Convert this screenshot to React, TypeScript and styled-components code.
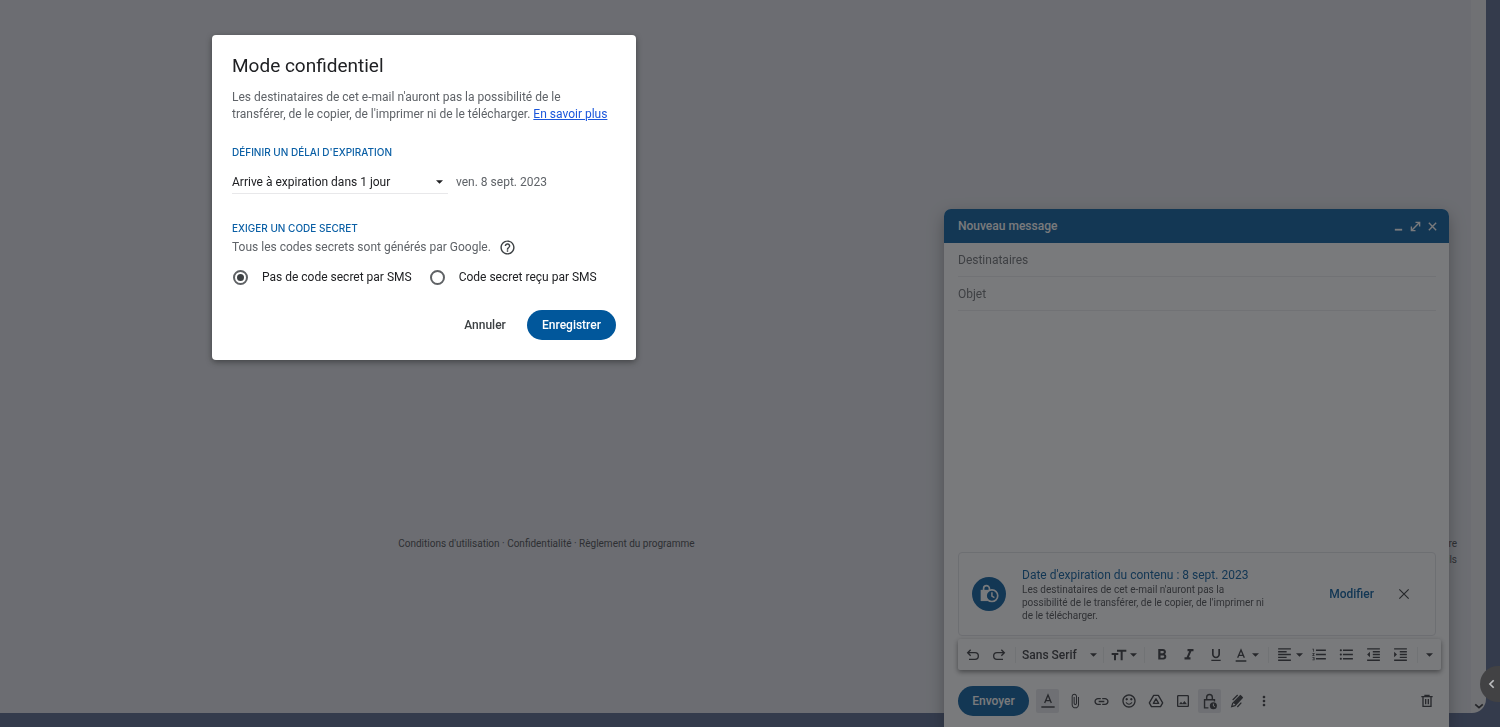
import React from "react";
import styled, { createGlobalStyle } from "styled-components";
import {
  MdAttachFile,
  MdFormatAlignLeft,
  MdFormatBold,
  MdFormatIndentDecrease,
  MdFormatIndentIncrease,
  MdFormatItalic,
  MdFormatListBulleted,
  MdFormatListNumbered,
  MdFormatUnderlined,
  MdHelpOutline,
  MdLink,
  MdMoreVert,
  MdOutlineImage,
  MdSentimentSatisfiedAlt,
} from "react-icons/md";

const theme = "#01579b";

const GlobalStyle = createGlobalStyle`
  * { box-sizing: border-box; }
  body { margin: 0; background: #536288; }
  body, button, input, select, textarea { font-family: Roboto, "Liberation Sans", sans-serif; }
  h1, h2, p { margin: 0; }
  button { border: 0; padding: 0; background: none; color: inherit; }
`;

/* ---------- page behind ---------- */

const Page = styled.div`
  display: flex;
  min-height: 100vh;
  padding: 0 14px 14px 0;
`;

const Main = styled.main`
  flex: 1;
  display: flex;
  align-items: flex-end;
  padding: 0 14px 145px 0;
  background: #dedfe5;
`;

const ScrollStrip = styled.div`
  display: flex;
  flex: none;
  align-items: flex-end;
  justify-content: center;
  width: 15px;
  padding-bottom: 2px;
  background: #e8e8ea;
  border-radius: 0 0 14px 0;
  color: #2b2c30;
`;

const Footer = styled.footer`
  display: flex;
  flex: 1;
  font-size: 10px;
  line-height: 16px;
  color: #444549;
`;

const Legal = styled.p`
  flex: 3;
  text-align: center;
`;

const Activity = styled.div`
  flex: 1;
  text-align: right;
`;

const PlainLink = styled.a`
  color: inherit;
  text-decoration: none;
`;

/* ---------- compose window ---------- */

const Compose = styled.section`
  position: fixed;
  right: 51px;
  bottom: 0;
  display: flex;
  flex-direction: column;
  width: 505px;
  height: 518px;
  background: #fff;
  border-radius: 7px 7px 0 0;
  box-shadow: 0 6px 16px rgba(0, 0, 0, 0.35);
`;

const ComposeHeader = styled.header`
  display: flex;
  align-items: center;
  justify-content: space-between;
  height: 34px;
  padding: 0 11px 0 14px;
  border-radius: 7px 7px 0 0;
  background: ${theme};
  color: #fff;
`;

const ComposeTitle = styled.h2`
  font-size: 12px;
  font-weight: 500;
`;

const WindowButtons = styled.div`
  display: flex;
  gap: 5px;
`;

const WindowButton = styled.button`
  display: flex;
  align-items: center;
  justify-content: center;
  width: 12px;
  height: 16px;
`;

const Field = styled.input`
  height: 34px;
  margin: 0 13px 0 14px;
  padding: 0;
  border: 0;
  border-bottom: 1px solid #ececee;
  background: none;
  font-size: 12px;
  outline: 0;
  &::placeholder {
    color: #6c6e72;
    opacity: 1;
  }
`;

const Body = styled.textarea`
  flex: 1;
  margin: 0 13px 0 14px;
  padding: 8px 0;
  border: 0;
  background: none;
  resize: none;
  outline: 0;
`;

const ExpiryCard = styled.div`
  display: flex;
  align-items: center;
  height: 84px;
  margin: 0 13px 3px 14px;
  padding: 0 24px 0 13px;
  border: 1px solid #e2e3e6;
  border-radius: 4px;
`;

const ExpiryBadge = styled.div`
  display: flex;
  align-items: center;
  justify-content: center;
  width: 34px;
  height: 34px;
  border-radius: 50%;
  background: ${theme};
  color: #fff;
`;

const ExpiryText = styled.div`
  width: 247px;
  margin-left: 16px;
  font-size: 10px;
  line-height: 13px;
  color: #4a4b4f;
`;

const ExpiryTitle = styled.h2`
  font-size: 12px;
  font-weight: 400;
  line-height: 16px;
  color: ${theme};
`;

const ExpiryEdit = styled.button`
  margin-left: auto;
  font-size: 12px;
  font-weight: 500;
  color: ${theme};
`;

const ExpiryClose = styled.button`
  display: flex;
  margin-left: 23px;
  color: #2f3033;
`;

const FormatBar = styled.div`
  display: flex;
  align-items: center;
  height: 31px;
  margin: 0 8px 0 14px;
  padding-left: 2px;
  border-radius: 2px;
  box-shadow: 0 2px 5px rgba(0, 0, 0, 0.5);
  color: #333438;
`;

const Tool = styled.button<{ $width?: number }>`
  display: flex;
  align-items: center;
  justify-content: center;
  width: ${(p) => p.$width ?? 27}px;
  height: 24px;
`;

const MenuTool = styled(Tool)`
  justify-content: flex-start;
  gap: 3px;
  padding-left: 4px;
`;

const Rule = styled.span`
  width: 1px;
  height: 16px;
  margin: 0 3px;
  background: #eceded;
`;

const FontPicker = styled.label`
  position: relative;
  display: flex;
  align-items: center;
  width: 75px;
  margin: 0 3px;
`;

const FontSelect = styled.select`
  width: 100%;
  padding: 0;
  border: 0;
  background: none;
  appearance: none;
  font-size: 12px;
  font-weight: 500;
  color: inherit;
`;

const CaretSlot = styled.span`
  position: absolute;
  right: 0;
  display: flex;
  pointer-events: none;
`;

const ActionBar = styled.div`
  display: flex;
  align-items: center;
  gap: 4px;
  height: 30px;
  margin: 16px 11px 11px 14px;
  color: #333438;
`;

const Send = styled.button`
  width: 71px;
  height: 30px;
  margin-right: 3px;
  border-radius: 15px;
  background: ${theme};
  color: #fff;
  font-size: 12px;
  font-weight: 500;
`;

const Action = styled.button<{ $active?: boolean; $last?: boolean }>`
  display: flex;
  align-items: center;
  justify-content: center;
  width: 23px;
  height: 24px;
  margin-left: ${(p) => (p.$last ? "auto" : "0")};
  border-radius: 2px;
  background: ${(p) => (p.$active ? "#e6e7ea" : "none")};
`;

/* ---------- dialog ---------- */

const Scrim = styled.div`
  position: fixed;
  inset: 0;
  padding: 35px 212px;
  background: rgba(32, 33, 36, 0.6);
`;

const Dialog = styled.div`
  width: 424px;
  padding: 19px 20px 20px;
  border-radius: 4px;
  background: #fff;
  box-shadow: 0 2px 6px rgba(0, 0, 0, 0.4);
  font-size: 12px;
  color: #202124;
`;

const DialogTitle = styled.h1`
  font-size: 19px;
  font-weight: 400;
  line-height: 24px;
`;

const Muted = styled.p`
  line-height: 17px;
  color: #5f6368;
`;

const Intro = styled(Muted)`
  margin-top: 11px;
`;

const LearnMore = styled.a`
  color: #1a56db;
`;

const SectionTitle = styled.h2<{ $gap: number }>`
  margin-top: ${(p) => p.$gap}px;
  font-family: Inter, Roboto, sans-serif;
  font-size: 10px;
  font-weight: 500;
  line-height: 14px;
  text-transform: uppercase;
  color: #0a5fa5;
`;

const ExpiryRow = styled.div`
  display: flex;
  align-items: center;
  gap: 8px;
  margin-top: 11px;
`;

const Picker = styled.label`
  position: relative;
  display: flex;
  align-items: center;
  width: 216px;
`;

const PickerSelect = styled.select`
  width: 100%;
  height: 24px;
  padding: 0;
  border: 0;
  border-bottom: 1px solid #e8e8ea;
  background: none;
  appearance: none;
  font-size: 12px;
  color: #202124;
`;

const PickerCaret = styled(CaretSlot)`
  right: 5px;
`;

const HelpRow = styled.div`
  display: flex;
  align-items: center;
  gap: 8px;
  height: 16px;
  margin-top: 4px;
`;

const HelpButton = styled.button`
  display: flex;
  color: #3c4043;
`;

const Radios = styled.div`
  display: flex;
  gap: 17px;
  margin-top: 14px;
`;

const RadioLabel = styled.label`
  display: flex;
  align-items: center;
  gap: 14px;
  height: 16px;
`;

const Radio = styled.input`
  display: grid;
  place-items: center;
  width: 15px;
  height: 15px;
  margin: 0 0 0 1px;
  border: 2px solid #5f6265;
  border-radius: 50%;
  appearance: none;
  &:checked::before {
    content: "";
    width: 7px;
    height: 7px;
    border-radius: 50%;
    background: #3c4043;
  }
`;

const Buttons = styled.div`
  display: flex;
  justify-content: flex-end;
  gap: 8px;
  margin-top: 25px;
`;

const DialogButton = styled.button<{ $primary?: boolean }>`
  min-width: ${(p) => (p.$primary ? 89 : 68)}px;
  height: 30px;
  border-radius: 15px;
  background: ${(p) => (p.$primary ? theme : "none")};
  color: ${(p) => (p.$primary ? "#fff" : "#3c4043")};
  font-size: 12px;
  font-weight: 500;
`;

const SidePanelTab = styled.button`
  position: fixed;
  right: 0;
  bottom: 25px;
  display: flex;
  align-items: center;
  width: 20px;
  height: 36px;
  padding-left: 7px;
  border-radius: 18px 0 0 18px;
  background: #424244;
  color: #bcbdbf;
`;

/* ---------- drawings ---------- */

type StrokeProps = { d: string; size?: number; width?: number };
const Stroke = ({ d, size = 16, width = 2 }: StrokeProps) => (
  <svg width={size} height={size} viewBox="0 0 24 24" fill="none" stroke="currentColor" strokeWidth={width} aria-hidden>
    <path d={d} />
  </svg>
);

const Caret = () => (
  <svg width="7" height="4" viewBox="0 0 8 4" fill="currentColor" aria-hidden>
    <path d="M0 0h8L4 4z" />
  </svg>
);

const TextSizeIcon = () => (
  <svg width="16" height="16" viewBox="0 0 24 24" fill="currentColor" aria-hidden>
    <path d="M9 4v3h5.500v13h3V7H23V4zM1 12h3.500v8h3v-8H11V9H1z" />
  </svg>
);

const DriveIcon = () => (
  <svg width="16" height="16" viewBox="0 0 24 24" fill="none" stroke="currentColor" strokeWidth="2" strokeLinejoin="round" aria-hidden>
    <path d="M8.500 3.500h7L22 14.800 18.800 20.500H5.200L2 14.800z" />
    <path d="M12 8.700l4 6.800H8z" />
  </svg>
);

const LockClockIcon = () => (
  <svg width="17" height="17" viewBox="0 0 24 24" fill="none" stroke="currentColor" strokeWidth="2" aria-hidden>
    <path d="M10.500 21H5V9.500h14V12M8 9.500V6a4 4 0 0 1 8 0v3.500" />
    <circle cx="17.500" cy="18" r="5" fill="currentColor" stroke="none" />
    <path d="M17.500 15v3.300l2.200 1.300" stroke="#fff" strokeWidth="1.300" />
  </svg>
);

const BadgeIcon = () => (
  <svg width="20" height="20" viewBox="0 0 24 24" fill="none" aria-hidden>
    <path d="M5.500 8V5.500a3.500 3.500 0 0 1 7 0V8" stroke="currentColor" strokeWidth="2" />
    <path d="M2 7h14v13.500H2z" fill="currentColor" />
    <circle cx="15.500" cy="14" r="7" fill={theme} stroke="currentColor" strokeWidth="2" />
    <path d="M15.500 10v4.500l3 1.800" stroke="currentColor" strokeWidth="1.800" />
  </svg>
);

const PenIcon = () => (
  <svg width="16" height="16" viewBox="0 0 24 24" fill="none" stroke="currentColor" strokeWidth="1.800" aria-hidden>
    <path d="M4 20.500l1.500-5L17 4l3 3L9 19z" />
    <path d="M8 15L18 5l1.500 1.500L10 16.500z" fill="currentColor" />
    <path d="M5.500 10.500L13 3M12.500 21l6-6.500" />
  </svg>
);

const TrashIcon = () => (
  <Stroke d="M6 6v14h12V6M3.500 5.500h17M9 5V3.500h6V5M10 9v8M14 9v8" />
);

const CLOSE = "M4 4l16 16M20 4L4 20";

export default function App() {
  return (
    <>
      <GlobalStyle />
      <Page>
        <Main>
          <Footer>
            <Legal>
              <PlainLink href="#terms">Conditions d'utilisation</PlainLink> ·{" "}
              <PlainLink href="#privacy">Confidentialité</PlainLink> ·{" "}
              <PlainLink href="#program">Règlement du programme</PlainLink>
            </Legal>
            <Activity>
              <div>heure</div>
              <PlainLink href="#details">Détails</PlainLink>
            </Activity>
          </Footer>
        </Main>
        <ScrollStrip>
          <Stroke d="M3 8l9 8 9-8" size={10} width={4} />
        </ScrollStrip>
      </Page>

      <Compose aria-label="Nouveau message">
        <ComposeHeader>
          <ComposeTitle>Nouveau message</ComposeTitle>
          <WindowButtons>
            <WindowButton aria-label="Réduire">
              <Stroke d="M4 19h16" size={11} width={4} />
            </WindowButton>
            <WindowButton aria-label="Plein écran">
              <Stroke d="M12 3h9v9M12 21H3v-9M20 4L4 20" size={11} width={3} />
            </WindowButton>
            <WindowButton aria-label="Fermer">
              <Stroke d={CLOSE} size={11} width={3} />
            </WindowButton>
          </WindowButtons>
        </ComposeHeader>
        <Field aria-label="Destinataires" placeholder="Destinataires" />
        <Field aria-label="Objet" placeholder="Objet" />
        <Body aria-label="Corps du message" />
        <ExpiryCard>
          <ExpiryBadge>
            <BadgeIcon />
          </ExpiryBadge>
          <ExpiryText>
            <ExpiryTitle>Date d'expiration du contenu : 8 sept. 2023</ExpiryTitle>
            <p>
              Les destinataires de cet e-mail n'auront pas la possibilité de le transférer, de le
              copier, de l'imprimer ni de le télécharger.
            </p>
          </ExpiryText>
          <ExpiryEdit>Modifier</ExpiryEdit>
          <ExpiryClose aria-label="Supprimer">
            <Stroke d={CLOSE} size={14} width={2} />
          </ExpiryClose>
        </ExpiryCard>
        <FormatBar role="toolbar">
          <Tool $width={26} aria-label="Annuler la saisie">
            <Stroke d="M8.500 4L4 8.500 8.500 13M4 8.500h11a5 5 0 0 1 0 10H6" />
          </Tool>
          <Tool $width={26} aria-label="Rétablir">
            <Stroke d="M15.500 4L20 8.500 15.500 13M20 8.500H9a5 5 0 0 0 0 10h9" />
          </Tool>
          <Rule />
          <FontPicker>
            <FontSelect aria-label="Police">
              <option>Sans Serif</option>
            </FontSelect>
            <CaretSlot>
              <Caret />
            </CaretSlot>
          </FontPicker>
          <Rule />
          <MenuTool $width={34} aria-label="Taille">
            <TextSizeIcon />
            <Caret />
          </MenuTool>
          <Rule />
          <Tool aria-label="Gras"><MdFormatBold size={18} /></Tool>
          <Tool aria-label="Italique"><MdFormatItalic size={18} /></Tool>
          <Tool aria-label="Souligné"><MdFormatUnderlined size={16} /></Tool>
          <MenuTool $width={36} aria-label="Couleur du texte">
            <Stroke d="M7 16L12 4.500 17 16M8.500 12.500h7M4 21h16" />
            <Caret />
          </MenuTool>
          <Rule />
          <MenuTool $width={34} aria-label="Aligner">
            <MdFormatAlignLeft size={17} />
            <Caret />
          </MenuTool>
          <Tool aria-label="Liste numérotée"><MdFormatListNumbered size={17} /></Tool>
          <Tool aria-label="Liste à puces"><MdFormatListBulleted size={17} /></Tool>
          <Tool aria-label="Retrait négatif"><MdFormatIndentDecrease size={17} /></Tool>
          <Tool aria-label="Retrait positif"><MdFormatIndentIncrease size={17} /></Tool>
          <Rule />
          <Tool $width={16} aria-label="Plus d'options de mise en forme"><Caret /></Tool>
        </FormatBar>
        <ActionBar>
          <Send>Envoyer</Send>
          <Action $active aria-label="Options de mise en forme">
            <Stroke d="M7 15L12 3l5 12M8.500 11.500h7M2 21h20" />
          </Action>
          <Action aria-label="Joindre des fichiers"><MdAttachFile size={16} /></Action>
          <Action aria-label="Insérer un lien"><MdLink size={17} /></Action>
          <Action aria-label="Insérer un emoji"><MdSentimentSatisfiedAlt size={16} /></Action>
          <Action aria-label="Insérer avec Drive"><DriveIcon /></Action>
          <Action aria-label="Insérer une photo"><MdOutlineImage size={16} /></Action>
          <Action $active aria-label="Mode confidentiel"><LockClockIcon /></Action>
          <Action aria-label="Insérer une signature"><PenIcon /></Action>
          <Action aria-label="Plus d'options"><MdMoreVert size={16} /></Action>
          <Action $last aria-label="Supprimer le brouillon"><TrashIcon /></Action>
        </ActionBar>
      </Compose>

      <Scrim>
        <Dialog role="dialog" aria-labelledby="confidential-title">
          <DialogTitle id="confidential-title">Mode confidentiel</DialogTitle>
          <Intro>
            Les destinataires de cet e-mail n'auront pas la possibilité de le transférer, de le
            copier, de l'imprimer ni de le télécharger. <LearnMore href="#help">En savoir plus</LearnMore>
          </Intro>
          <SectionTitle $gap={22}>Définir un délai d'expiration</SectionTitle>
          <ExpiryRow>
            <Picker>
              <PickerSelect aria-label="Délai d'expiration">
                <option>Arrive à expiration dans 1 jour</option>
              </PickerSelect>
              <PickerCaret>
                <Caret />
              </PickerCaret>
            </Picker>
            <Muted>ven. 8 sept. 2023</Muted>
          </ExpiryRow>
          <SectionTitle $gap={27}>Exiger un code secret</SectionTitle>
          <HelpRow>
            <Muted>Tous les codes secrets sont générés par Google.</Muted>
            <HelpButton aria-label="Aide">
              <MdHelpOutline size={17} />
            </HelpButton>
          </HelpRow>
          <Radios>
            <RadioLabel>
              <Radio type="radio" name="passcode" defaultChecked />
              Pas de code secret par SMS
            </RadioLabel>
            <RadioLabel>
              <Radio type="radio" name="passcode" />
              Code secret reçu par SMS
            </RadioLabel>
          </Radios>
          <Buttons>
            <DialogButton>Annuler</DialogButton>
            <DialogButton $primary>Enregistrer</DialogButton>
          </Buttons>
        </Dialog>
      </Scrim>

      <SidePanelTab aria-label="Afficher le panneau latéral">
        <Stroke d="M16 3l-9 9 9 9" size={10} width={4} />
      </SidePanelTab>
    </>
  );
}
